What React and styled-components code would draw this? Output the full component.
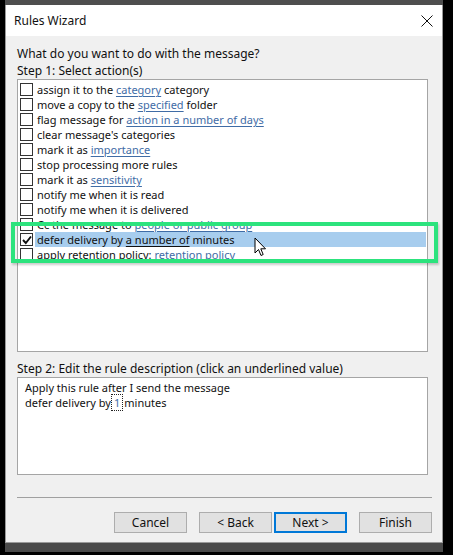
import React from 'react'
import styled, { createGlobalStyle } from 'styled-components'

const GlobalStyle = createGlobalStyle`
  html, body {
    margin: 0;
    padding: 0;
    background: #000;
  }
  * {
    box-sizing: border-box;
  }
`

const Stage = styled.div`
  width: 453px;
  height: 555px;
  padding: 5px 0 0 5px;
  background: #000;
  overflow: hidden;
  font-family: 'Noto Sans', 'Open Sans', sans-serif;
  font-size: 12px;
  color: #111;
`

const Window = styled.div`
  position: relative;
  width: 438px;
  height: 538px;
  background: #f0f0f0;
  border: 1px solid #9a9a9a;
  border-top: none;
  display: flex;
  flex-direction: column;
  box-shadow: 0 -5px 0 #4e4e4e, 0 9px 0 #4a4a4a;
`

const TitleBar = styled.div`
  height: 31px;
  background: #fff;
  display: flex;
  align-items: center;
  justify-content: space-between;
  padding: 0 9px 0 8px;
  font-size: 12px;
`

const Body = styled.div`
  flex: 1;
  display: flex;
  flex-direction: column;
  padding: 9px 14px 0 11px;
`

const Label = styled.div`
  line-height: 17px;
  white-space: nowrap;
  margin-top: ${(p) => p.$top || 0}px;
`

const ListBox = styled.div`
  height: 273px;
  background: #fff;
  border: 1px solid #a5a5a5;
  padding: 2px 1px 0 2px;
  display: flex;
  flex-direction: column;
  font-size: 11px;
`

const Row = styled.div`
  display: flex;
  align-items: center;
  height: 15px;
  white-space: nowrap;
`

const Check = styled.span`
  width: 13px;
  height: 13px;
  border: 1px solid #333;
  background: #fff;
  flex: none;
  display: flex;
  align-items: center;
  justify-content: center;
`

const RowText = styled.span`
  flex: 1;
  height: 15px;
  line-height: 15px;
  margin-left: 2px;
  padding-left: 2px;
  background: ${(p) => (p.$selected ? '#a7cdee' : 'transparent')};
`

const Link = styled.span`
  color: ${(p) => (p.$plain ? '#111' : '#3f6ca6')};
  text-decoration: underline;
  text-underline-offset: 2px;
  text-decoration-thickness: 1px;
`

const DescBox = styled.div`
  height: 98px;
  background: #fff;
  border: 1px solid #a5a5a5;
  padding: 2px 7px;
  line-height: 15px;
  font-size: 11px;
`

const Focus = styled.span`
  outline: 1px dotted #222;
  color: #3f6ca6;
  padding: 0 2px;
  margin: 0 2px 0 1px;
`

const Separator = styled.div`
  height: 1px;
  background: #a0a0a0;
  margin: 22px -4px 0 0;
`

const ButtonRow = styled.div`
  display: flex;
  justify-content: flex-end;
  margin: 14px -4px 0 0;
`

const Button = styled.button`
  width: 73px;
  height: 21px;
  margin-left: ${(p) => p.$gap}px;
  background: #e1e1e1;
  border: ${(p) => (p.$default ? '2px solid #0078d7' : '1px solid #adadad')};
  font-family: inherit;
  font-size: 12px;
  color: #111;
  padding: 0;
`

const Highlight = styled.div`
  position: absolute;
  left: 5px;
  top: 217px;
  width: 427px;
  height: 41px;
  border: 4px solid #2ce37d;
  box-shadow: 1px 2px 2px rgba(0, 0, 0, 0.2);
  pointer-events: none;
`

const Cursor = styled.svg`
  position: absolute;
  left: 248px;
  top: 232px;
`

const actions = [
  [['assign it to the '], ['category', 1], [' category']],
  [['move a copy to the '], ['specified', 1], [' folder']],
  [['flag message for '], ['action in a number of days', 1]],
  [["clear message's categories"]],
  [['mark it as '], ['importance', 1]],
  [['stop processing more rules']],
  [['mark it as '], ['sensitivity', 1]],
  [['notify me when it is read']],
  [['notify me when it is delivered']],
  [['Cc the message to '], ['people or public group', 1]],
  [['defer delivery by '], ['a number of', 2], [' minutes']],
  [['apply retention policy: '], ['retention policy', 1]],
]

function CheckMark() {
  return (
    <svg width='10' height='10' viewBox='0 0 10 10'>
      <path d='M1 5 L3.8 8 L9 1.5' fill='none' stroke='#111' strokeWidth='1.9' />
    </svg>
  )
}

export default function App() {
  return (
    <Stage>
      <GlobalStyle />
      <Window>
        <TitleBar>
          <span>Rules Wizard</span>
          <svg width='12' height='12' viewBox='0 0 12 12'>
            <path d='M0.5 0.5 L11.5 11.5 M11.5 0.5 L0.5 11.5' stroke='#111' strokeWidth='1' />
          </svg>
        </TitleBar>
        <Body>
          <Label>What do you want to do with the message?</Label>
          <Label>Step 1: Select action(s)</Label>
          <ListBox>
            {actions.map((parts, i) => {
              const selected = i === 10
              return (
                <Row key={i}>
                  <Check>{selected && <CheckMark />}</Check>
                  <RowText $selected={selected}>
                    {parts.map(([t, kind], j) =>
                      kind ? (
                        <Link key={j} $plain={kind === 2}>
                          {t}
                        </Link>
                      ) : (
                        <span key={j}>{t}</span>
                      )
                    )}
                  </RowText>
                </Row>
              )
            })}
          </ListBox>
          <Label $top={8}>Step 2: Edit the rule description (click an underlined value)</Label>
          <DescBox>
            <div>Apply this rule after I send the message</div>
            <div>
              defer delivery by<Focus>1</Focus>minutes
            </div>
          </DescBox>
          <Separator />
          <ButtonRow>
            <Button $gap={0}>Cancel</Button>
            <Button $gap={12}>&lt; Back</Button>
            <Button $gap={2} $default>
              Next &gt;
            </Button>
            <Button $gap={12}>Finish</Button>
          </ButtonRow>
        </Body>
        <Highlight />
        <Cursor width='14' height='20' viewBox='0 0 14 20'>
          <path
            d='M1 1 L1 16 L4.5 12.5 L7 18.5 L9.2 17.5 L6.8 11.8 L11.5 11.8 Z'
            fill='#fff'
            stroke='#000'
            strokeWidth='1'
          />
        </Cursor>
      </Window>
    </Stage>
  )
}
